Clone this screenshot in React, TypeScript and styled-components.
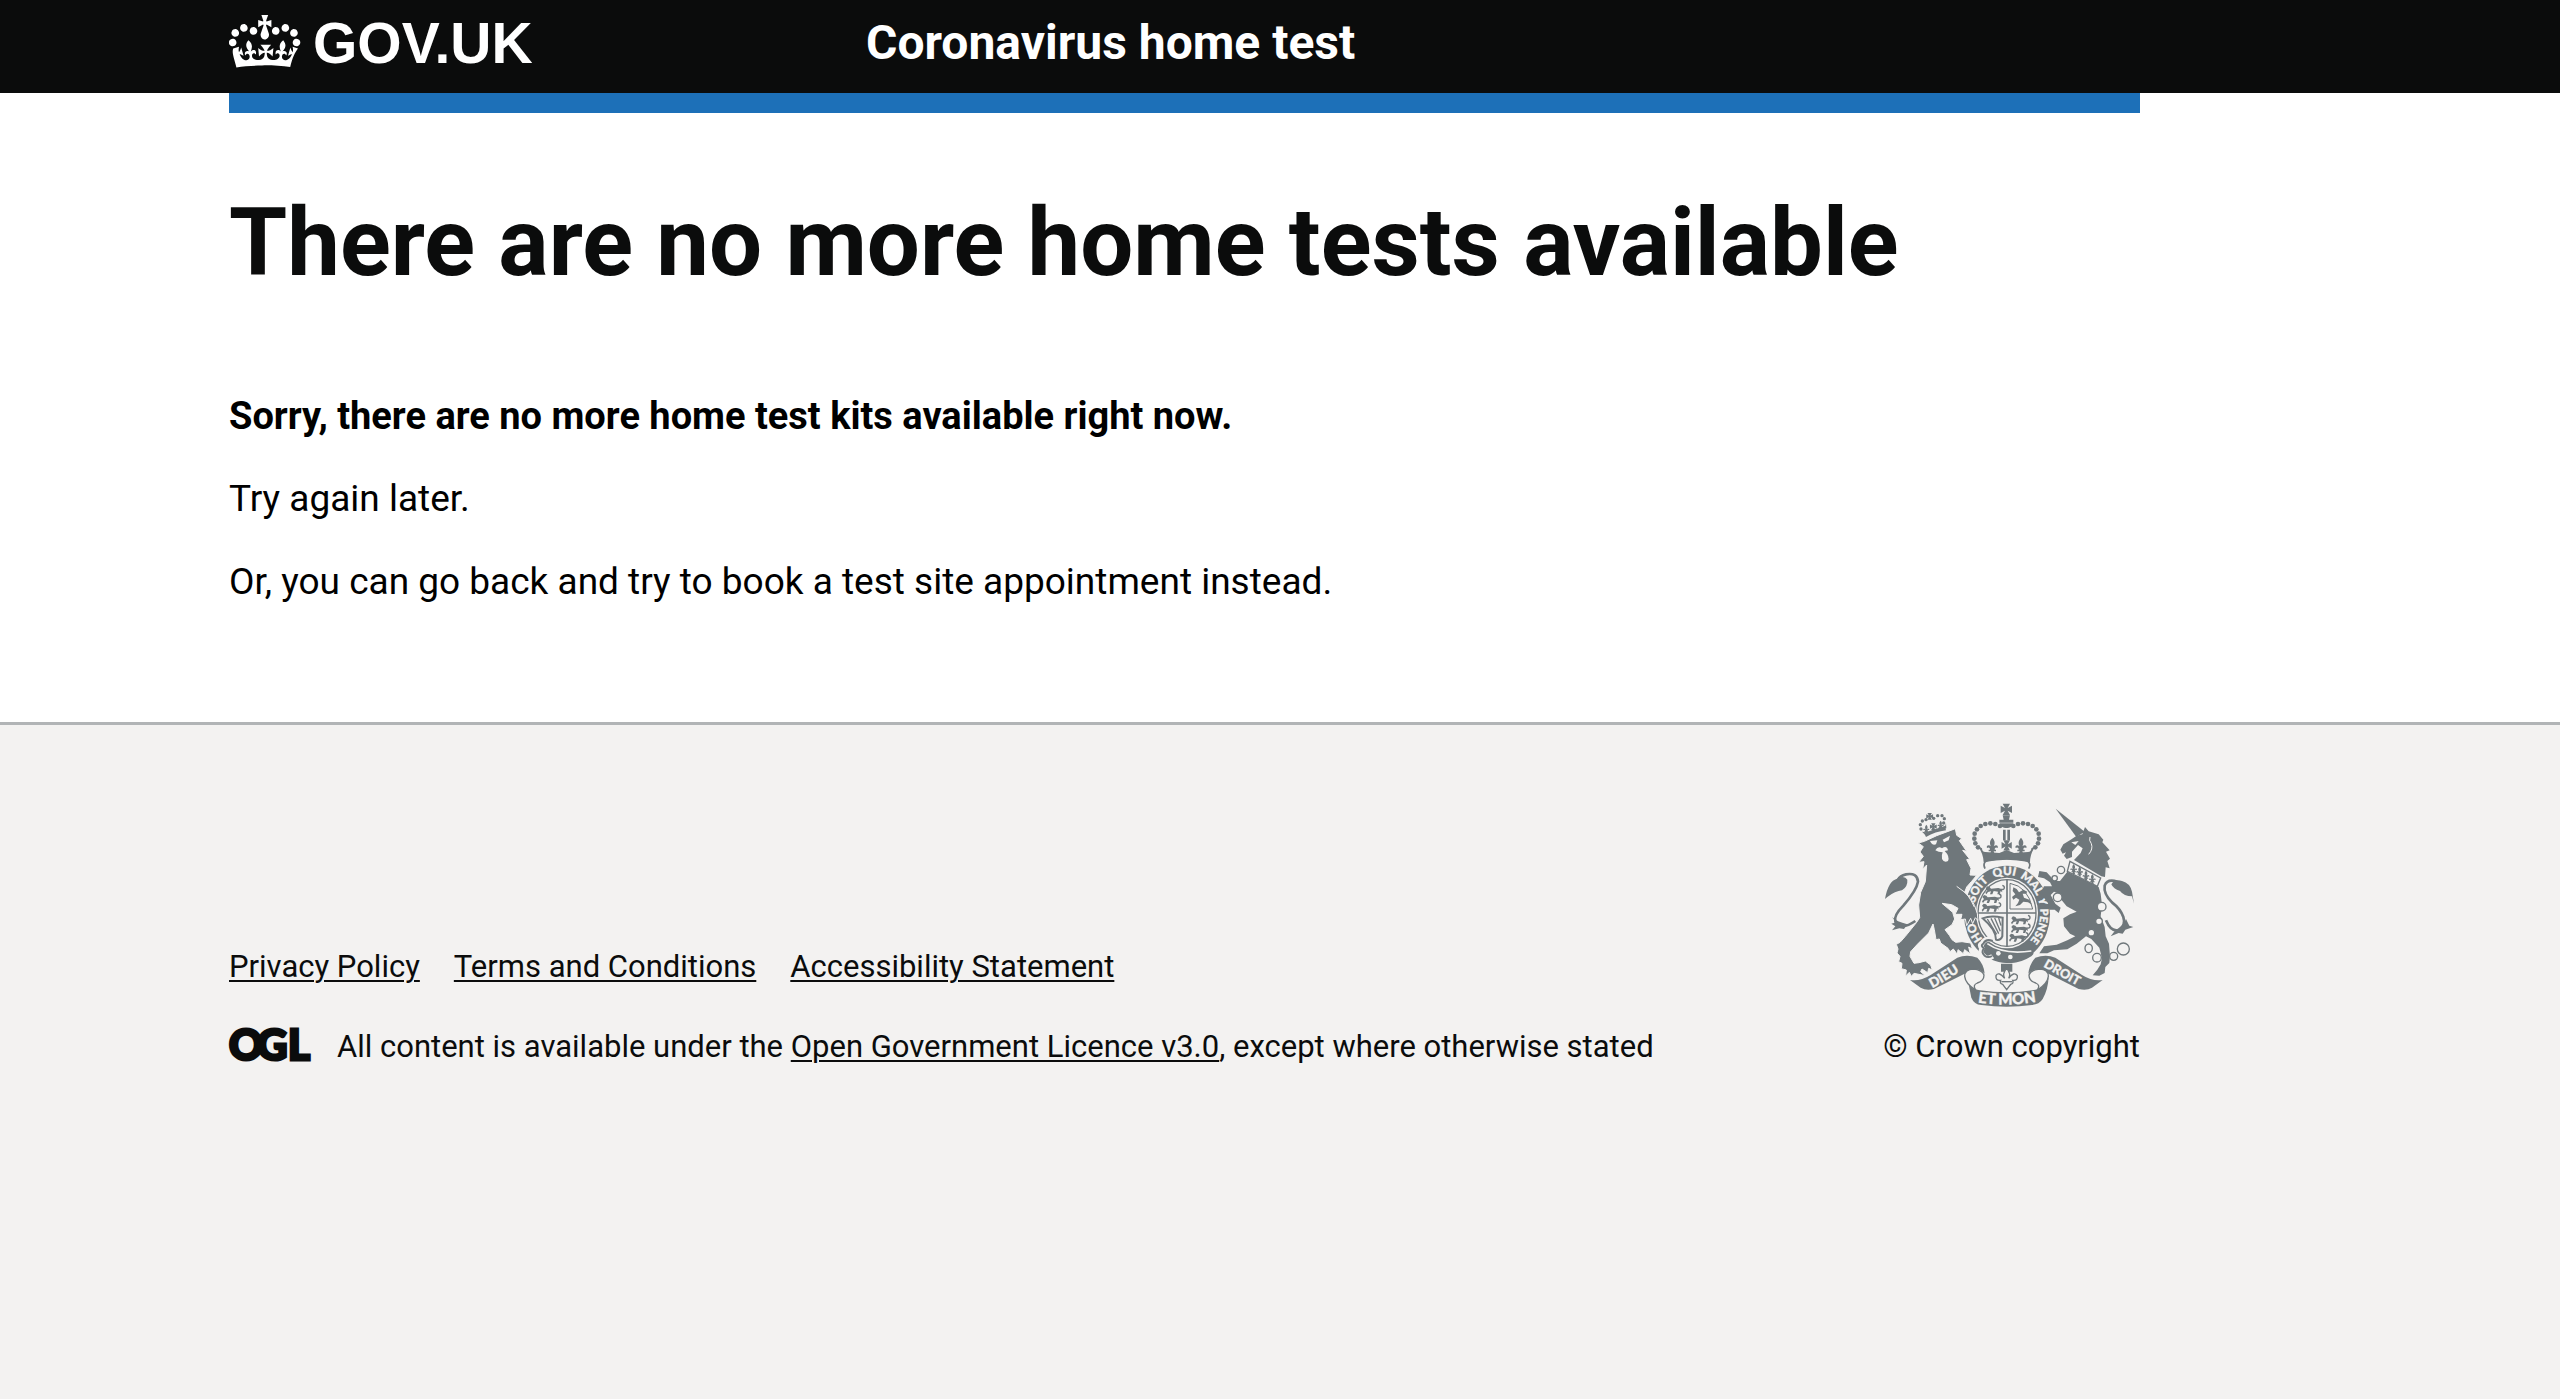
import React from 'react';
import styled, { createGlobalStyle } from 'styled-components';

const ink = '#0b0c0c';
const paper = '#f3f2f1';
const crestGrey = '#6f777b';

const GlobalStyle = createGlobalStyle`
  *, *::before, *::after { box-sizing: border-box; }
  body {
    margin: 0;
    background: ${paper};
    color: ${ink};
    font-family: Roboto, "Liberation Sans", sans-serif;
  }
`;

const Page = styled.div`
  display: flex;
  flex-direction: column;
  min-height: 100vh;
`;

const Container = styled.div`
  max-width: 1911px;
  margin: 0 30px 0 229px;
`;

const Header = styled.header`
  background: ${ink};
  color: #fff;
`;

const HeaderRow = styled(Container)`
  display: grid;
  grid-template-columns: 1fr 2fr;
  min-height: 93px;
`;

const HomeLink = styled.a`
  display: flex;
  gap: 12px;
  padding-top: 7px;
  color: #fff;
  text-decoration: none;
`;

const CrownIcon = styled.svg`
  width: 72px;
  height: 64px;
  fill: currentColor;
`;

const Wordmark = styled.span`
  font: 700 57px/72px "Liberation Sans", Arial, sans-serif;
`;

const ServiceLink = styled.a`
  padding-top: 15px;
  color: #fff;
  font-size: 48px;
  font-weight: 700;
  line-height: 56px;
  text-decoration: none;
`;

const Main = styled.main`
  background: #fff;
`;

const BlueBar = styled.div`
  height: 20px;
  background: #1d70b8;
`;

const Content = styled.div`
  padding: 80px 0 116px;
`;

const Title = styled.h1`
  margin: 0 0 99px;
  font-size: 94px;
  font-weight: 700;
  line-height: 100px;
`;

const Body = styled.div`
  display: grid;
  gap: 35px;
  color: #000;
`;

const Paragraph = styled.p<{ $strong?: boolean }>`
  margin: 0;
  font-size: ${p => (p.$strong ? 38 : 37)}px;
  font-weight: ${p => (p.$strong ? 700 : 400)};
  line-height: 48px;
`;

const Footer = styled.footer`
  flex: 1;
  border-top: 3px solid #b1b4b6;
  padding: 78px 0;
  background: ${paper};
  font-size: 31px;
  line-height: 40px;
`;

const FooterRow = styled(Container)`
  display: flex;
  align-items: flex-end;
  justify-content: space-between;
  gap: 40px;
`;

const FooterMeta = styled.div`
  display: grid;
  gap: 40px;
`;

const LinkList = styled.ul`
  display: flex;
  flex-wrap: wrap;
  gap: 0 34px;
  margin: 0;
  padding: 0;
  list-style: none;
`;

const TextLink = styled.a`
  color: ${ink};
  text-decoration: underline;
  text-decoration-thickness: 2px;
  text-underline-offset: 3px;
`;

const Licence = styled.div`
  display: flex;
  gap: 26px;
  align-items: flex-start;
`;

const OglLogo = styled.svg`
  flex: none;
  width: 82px;
  height: 35px;
  overflow: visible;
`;

const Copyright = styled.a`
  display: flex;
  flex: none;
  flex-direction: column;
  align-items: flex-end;
  gap: 20px;
  color: ${ink};
  text-decoration: none;
`;

const CrestSvg = styled.svg`
  width: 249px;
  height: 204px;
  margin-right: 6px;
`;

function Crown() {
  return (
    <CrownIcon viewBox="0 0 36 32" aria-hidden="true">
      <path d="M6.7 12.2c1 .4 2.1-.1 2.5-1s-.1-2.1-1-2.5c-1-.4-2.1.1-2.5 1-.4 1 0 2.1 1 2.5m-4.3 2.5c1 .4 2.1-.1 2.5-1s-.1-2.1-1-2.5c-1-.4-2.1.1-2.5 1-.5 1 0 2.1 1 2.5m-1.3 4.8c1 .4 2.1-.1 2.5-1 .4-1-.1-2.1-1-2.5-1-.4-2.1.1-2.5 1-.4 1 0 2.1 1 2.5m10.4-5.8c1 .4 2.1-.1 2.5-1s-.1-2.1-1-2.5c-1-.4-2.1.1-2.5 1s0 2.1 1 2.5m17.4-1.5c-1 .4-2.1-.1-2.5-1s.1-2.1 1-2.5c1-.4 2.1.1 2.5 1 .5 1 0 2.1-1 2.5m4.3 2.5c-1 .4-2.1-.1-2.5-1s.1-2.1 1-2.5c1-.4 2.1.1 2.5 1 .5 1 0 2.1-1 2.5m1.3 4.8c-1 .4-2.1-.1-2.5-1-.4-1 .1-2.1 1-2.5 1-.4 2.1.1 2.5 1 .4 1 0 2.1-1 2.5m-10.4-5.8c-1 .4-2.1-.1-2.5-1s.1-2.1 1-2.5c1-.4 2.1.1 2.5 1s0 2.1-1 2.5m-5.3-4.9 2.4 1.3V6.5l-2.4.8c-.1-.1-.1-.2-.2-.3s1-3 1-3h-3.4s1 2.9 1 3c-.1.1-.2.2-.2.3l-2.4-.8v3.6L17 8.8c.1.1.2.2.3.3l-1.4 4.2c-.1.2-.1.4-.1.7 0 1.1.8 2.1 1.9 2.2h.6C19.2 16 20 15 20 14c0-.2 0-.5-.1-.7l-1.4-4.2c.2-.1.3-.2.3-.3m-1 20.3c4.6 0 8.9.3 12.8.9 1.1-4.6 2.4-7.3 3.9-9.2l-2.7-.9c.3 1.2.3 1.9 0 2.7-.4-.4-.8-1.2-1.1-2.3l-1.2 4.1c.8-.5 1.3-.8 2-.8-1.1 2.5-2.6 3.1-3.5 3-1.1-.2-1.7-1.2-1.5-2.1.3-1.3 1.6-1.5 2.1-.2 1-2-.7-2.8-1.9-2.1 1.8-1.9 2.1-3.5.4-5.6-2.1 1.7-2.1 3.4-1.2 5.6-1.2-1.4-3.2-.6-2.5 1.6.9-1.4 2.1-.5 1.9.8-.2 1.1-1.7 2.1-3.5 1.9-2.7-.2-2.9-2.1-2.9-3.6.7-.1 1.9.5 2.9 1.9l.4-4.3c-1.1 1.1-2.1 1.4-3.2 1.4.4-1.2 2.1-3 2.1-3h-5.4s1.7 1.8 2.1 3c-1.1 0-2.1-.3-3.2-1.4l.4 4.3c1-1.4 2.2-2 2.9-1.9-.1 1.5-.2 3.4-2.9 3.6-1.9.2-3.4-.8-3.5-1.9-.2-1.3 1-2.2 1.9-.8.7-2.3-1.2-3-2.5-1.6.9-2.2.9-3.9-1.2-5.6-1.7 2-1.3 3.7.4 5.6-1.2-.7-2.9.1-1.9 2.1.5-1.4 1.8-1.1 2.1.2.2.9-.4 1.9-1.5 2.1-.9.2-2.4-.5-3.5-3 .6 0 1.2.3 2 .8l-1.2-4.1c-.3 1.1-.7 1.9-1.1 2.3-.3-.8-.2-1.4 0-2.7l-2.9.9C1.3 23 2.6 25.7 3.7 30.2c3.9-.6 8.2-.9 12.8-.9" />
    </CrownIcon>
  );
}

function Ogl() {
  return (
    <OglLogo viewBox="0 0 82 35" role="img" aria-label="OGL">
      <g fill={ink} stroke={ink} strokeWidth="3" fontFamily="Lato, sans-serif" fontWeight="900" fontSize="42">
        <text x="0 28 59" y="33">OGL</text>
      </g>
    </OglLogo>
  );
}

const crownBeads = [
  [390, 109], [376, 103], [361, 101], [346, 103], [332, 109], [321, 119], [314, 132], [313, 147], [316, 161], [324, 173],
];

const lionBeads = [
  [153, 118], [151, 105], [157, 94], [168, 90], [191, 86], [203, 78], [216, 78], [223, 87], [221, 100],
];

function Fleur({ x, y, s = 1 }: { x: number; y: number; s?: number }) {
  return (
    <path
      transform={`translate(${x} ${y}) scale(${s})`}
      d="M0-22C-9-12-8-4-4 4C-11-3-19 1-16 9C-11 5-7 8-7 14H-11V19H-4L-7 28H7L4 19H11V14H7C7 8 11 5 16 9C19 1 11-3 4 4C8-4 9-12 0-22Z"
    />
  );
}

function Cross({ x, y, s = 1 }: { x: number; y: number; s?: number }) {
  return (
    <path
      transform={`translate(${x} ${y}) scale(${s})`}
      d="M-11-17H11L4-4L17-11V11L4 4L11 17H-11L-4 4L-17 11V-11L-4-4Z"
    />
  );
}

function Passant({ x, y }: { x: number; y: number }) {
  return (
    <g transform={`translate(${x} ${y})`}>
      <path d="M2 6L7 0L14 2L18 7L40 5L50 8L52 18L47 14L44 24H37L39 16L26 14L22 24H15L18 15L9 17L4 24L1 19L7 12Z" />
      <path d="M48 9C60 12 61 0 52-3" fill="none" stroke={crestGrey} strokeWidth="4" />
    </g>
  );
}

function Crest() {
  return (
    <CrestSvg viewBox="45 40 747 612" aria-hidden="true">
      <defs>
        <path id="garter" d="M411 484C356 484 311 433 311 370S356 256 411 256S511 307 511 370S466 484 411 484Z" />
        <path id="ribbon-left" d="M187 595Q225 575 290 532" />
        <path id="ribbon-mid" d="M323 638Q410 652 500 636" />
        <path id="ribbon-right" d="M519 531Q570 560 644 600" />
      </defs>

      <g fill={crestGrey}>
        {/* imperial crown */}
        <Cross x={409} y={59} />
        <path d="M398 77H420L417 90H430V99H388V90H401Z" />
        <path d="M389 101H430C430 120 389 120 389 101Z" />
        {crownBeads.map(([x, y]) => (
          <React.Fragment key={`${x}-${y}`}>
            <circle cx={x} cy={y} r="7" />
            <circle cx={820 - x} cy={y} r="7" />
          </React.Fragment>
        ))}
        <path d="M399 120H407V152H399ZM412 120H420V152H412Z" />
        <Cross x={410} y={167} s={0.9} />
        <Fleur x={367} y={166} />
        <Fleur x={453} y={166} />
        <path d="M322 168L336 176Q336 187 346 187L388 190L410 181L432 190L474 187Q484 187 484 176L498 168Q480 190 480 218Q410 202 341 218Q340 190 322 168Z" />
      </g>
      <path d="M345 237Q334 214 362 211Q410 203 458 211Q488 214 476 237" fill="none" stroke={crestGrey} strokeWidth="5" />

      {/* garter and shield */}
      <ellipse cx="411" cy="374" rx="129" ry="146" fill={crestGrey} />
      <ellipse cx="411" cy="370" rx="93" ry="106" fill={paper} />
      <ellipse cx="411" cy="370" rx="87" ry="100" fill="none" stroke={crestGrey} strokeWidth="4" />
      <path d="M411 270V470M324 370H498" stroke={crestGrey} strokeWidth="5" />
      <g fill={crestGrey}>
        <Passant x={345} y={290} />
        <Passant x={335} y={316} />
        <Passant x={334} y={342} />
        <Passant x={422} y={380} />
        <Passant x={422} y={406} />
        <Passant x={416} y={432} />
        <path d="M430 293L440 298L447 308L460 300L472 306L468 312L458 312L462 324L478 330L486 345L474 338L460 336L450 346L436 350L444 340L448 330L438 324L430 330L426 322L436 314L428 304Z" />
      </g>
      <g fill="none" stroke={crestGrey} strokeWidth="4">
        <path d="M420 281Q474 290 488 358H420Z" strokeWidth="3" />
        <path d="M338 386Q362 376 398 384L397 440Q390 455 378 450Q378 420 338 386Z" strokeWidth="6" />
        <path d="M352 388L380 434M363 386L386 432M374 385L391 425M386 385L393 408" />
      </g>
      <g fill={paper} stroke={paper} strokeWidth="1" fontFamily="Lato, sans-serif" fontWeight="900" fontSize="35">
        <text><textPath href="#garter" startOffset="84">HO</textPath></text>
        <text><textPath href="#garter" startOffset="198">SOIT</textPath></text>
        <text><textPath href="#garter" startOffset="296">QUI</textPath></text>
        <text><textPath href="#garter" startOffset="376">MAL</textPath></text>
        <text><textPath href="#garter" startOffset="460">Y</textPath></text>
        <text><textPath href="#garter" startOffset="492" fontSize="33">PENSE</textPath></text>
      </g>
      <path d="M350 460Q400 496 478 486Q500 484 484 500Q440 528 400 517L350 500Z" fill={crestGrey} />
      <path d="M352 462Q400 496 484 484" fill="none" stroke={paper} strokeWidth="5" />
      <path d="M368 452Q346 442 336 462Q326 466 336 476Q328 490 342 500Q352 512 368 500" fill="none" stroke={paper} strokeWidth="15" />
      <path d="M368 454Q348 446 340 462Q330 468 342 476Q332 488 344 498Q354 506 366 499" fill="none" stroke={crestGrey} strokeWidth="6" />
      <circle cx="385" cy="491" r="7" fill={paper} />
      <circle cx="421" cy="502" r="7" fill={paper} />

      {/* lion */}
      <g fill={crestGrey} stroke={paper} strokeWidth="3">
        <path d="M145 160L163 155L200 138L256 117L260 137L275 147L268 153L290 185L278 182L299 208L290 210L303 236L300 256L320 257L304 276L290 292L284 308L302 326L314 348L322 372L324 392L316 384L308 402L302 386L290 408L286 388L272 390L276 374L255 374L264 356L245 345L216 341L248 368L254 388L246 405L225 420L238 437L246 450L257 458L276 456L302 460L307 478L296 472L301 493L284 480L280 492L264 480L262 494L250 478L240 486L234 476L212 460L208 448L198 450L193 420L189 403L176 430L142 464L122 486L120 500L132 521L147 519L166 514L182 526L187 541L176 536L173 549L156 538L152 546L166 558L132 551L124 560L118 548L107 559L109 541L94 537L96 521L86 516L90 500L81 490L84 478L79 464L90 458L106 440L140 398L149 384L146 346L152 308L166 276L168 250L170 226L158 238L162 216L146 218L160 200L150 187L160 171Z" />
      </g>
      <path d="M136 394Q92 424 76 396Q70 378 100 348Q140 302 144 276Q142 248 108 254Q90 258 84 270" fill="none" stroke={crestGrey} strokeWidth="8" />
      <g fill={crestGrey}>
        <path d="M45 328Q50 300 60 284Q66 272 84 266Q104 256 112 270Q114 290 96 302Q76 304 52 322Z" />
        <path d="M112 404L102 418L88 416L66 422L76 410L64 402L78 398L66 382Q80 396 112 404Z" />
        <path d="M164 134Q194 118 226 114L228 122Q196 126 168 142Z" />
        {lionBeads.map(([x, y]) => <circle key={`${x}-${y}`} cx={x} cy={y} r="5" />)}
        <Cross x={179} y={80} s={0.6} />
        <Cross x={190} y={111} s={0.6} />
        <Fleur x={169} y={117} s={0.55} />
        <Fleur x={212} y={105} s={0.55} />
        <path d="M156 126L168 128L226 108L228 100L229 116L166 136Z" />
      </g>
      <path d="M180 154L202 152L198 164Q186 168 180 154ZM218 150L240 138L236 152L222 158ZM196 182Q204 168 216 176Q230 166 234 182L224 184Q240 200 234 214Q222 220 216 208Q214 196 218 188L206 186Z" fill={paper} />
      <path d="M260 290L290 312L304 334L313 352" fill="none" stroke={paper} strokeWidth="3" />

      {/* unicorn */}
      <g fill={crestGrey}>
        <path d="M557 57L644 126L619 142Z" />
        <path d="M645 112L656 125L686 134L700 150L697 158L719 182L708 186L720 207L712 214L719 236L707 233L705 262L694 260L612 211L632 190L638 176L624 166L606 186L606 202L590 208L582 198L588 188L578 192L571 180L580 164L602 150L620 138L637 134Z" />
        <path d="M592 246L686 292L692 312L696 346L692 380L704 412L707 440L717 462L720 500L718 520L706 532L704 550L688 558L668 557L682 540L692 524L696 506L688 474L664 448L648 440L620 462L592 479L552 482L532 491L508 491L522 470L560 465L592 452L616 440L600 432L582 410L580 386L600 374L620 366L590 350L574 330L568 312L552 306L542 316L556 342L572 354L566 370L554 360L538 360L534 340L520 322L516 302L522 290L546 290L540 278L522 266L504 262L508 244L530 248L554 274L570 274Z" />
        <path d="M792 342L786 320Q762 320 750 304Q730 298 724 284Q734 266 756 274Q780 280 786 306Z" />
        <path d="M768 388L778 408L790 412L766 420L758 432L746 430L722 440L736 422Q760 410 768 388Z" />
      </g>
      <path d="M708 392Q724 430 748 420Q768 406 760 382Q752 358 726 338Q700 312 704 288Q712 266 742 276" fill="none" stroke={crestGrey} strokeWidth="8" />
      <path d="M600 215L692 265L682 290L592 245Z" fill={paper} stroke={crestGrey} strokeWidth="4" />
      <g fill={crestGrey}>
        <Fleur x={611} y={236} s={0.6} />
        <Fleur x={629} y={244} s={0.6} />
        <Fleur x={648} y={256} s={0.6} />
        <Fleur x={667} y={266} s={0.6} />
      </g>
      <path d="M604 158L626 154L616 166Z" fill={paper} />
      <path d="M660 142Q656 152 664 162Q670 178 656 194" fill="none" stroke={paper} strokeWidth="3" />
      <g fill={paper} stroke={crestGrey} strokeWidth="4">
        <circle cx="573" cy="241" r="11" />
        <circle cx="554" cy="266" r="8" />
        <circle cx="563" cy="323" r="13" />
        <circle cx="695" cy="351" r="13" />
        <circle cx="687" cy="395" r="10" />
        <circle cx="664" cy="429" r="10" />
        <ellipse cx="656" cy="476" rx="11" ry="13" />
        <circle cx="681" cy="504" r="13" />
        <circle cx="731" cy="500" r="12" />
        <circle cx="760" cy="478" r="18" />
      </g>

      {/* motto ribbon */}
      <g fill={crestGrey}>
        <path d="M120 571Q150 576 182 556L262 504Q290 492 322 504Q342 524 344 552Q330 536 308 540L192 598Q168 604 152 594Z" />
        <path d="M698 571Q668 576 636 556L556 504Q528 492 496 504Q478 524 475 552Q490 536 512 540L626 598Q650 604 666 594Z" />
        <path d="M296 584Q304 600 330 602Q410 614 488 602Q514 600 524 584Q532 576 536 562Q534 600 518 628Q508 644 486 646Q410 656 334 646Q312 644 304 624Z" />
        <path d="M393 522H427V546H418Q410 536 402 546H393Z" />
      </g>
      <g fill={paper} stroke={crestGrey} strokeWidth="4">
        <path d="M310 538Q284 538 284 560Q286 582 318 602Q306 586 322 580Q342 574 342 556Q336 540 310 538Z" />
        <path d="M509 538Q535 538 535 560Q533 582 501 602Q513 586 497 580Q477 574 477 556Q483 540 509 538Z" />
        <path d="M410 536Q396 552 404 566Q386 544 378 558Q376 574 392 572Q388 582 398 584L410 600L422 584Q432 582 428 572Q444 574 442 558Q432 544 416 566Q424 552 410 536Z" />
        <path d="M394 576H426" />
      </g>
      <g fill={paper} stroke={paper} strokeWidth="1" fontFamily="Lato, sans-serif" fontWeight="900">
        <text fontSize="40"><textPath href="#ribbon-left">DIEU</textPath></text>
        <text fontSize="45"><textPath href="#ribbon-mid">ET MON</textPath></text>
        <text fontSize="38"><textPath href="#ribbon-right">DROIT</textPath></text>
      </g>
    </CrestSvg>
  );
}

export default function App() {
  return (
    <Page>
      <GlobalStyle />
      <Header>
        <HeaderRow>
          <HomeLink href="#">
            <Crown />
            <Wordmark>GOV.UK</Wordmark>
          </HomeLink>
          <ServiceLink href="#">Coronavirus home test</ServiceLink>
        </HeaderRow>
      </Header>
      <Main>
        <Container>
          <BlueBar />
          <Content>
            <Title>There are no more home tests available</Title>
            <Body>
              <Paragraph $strong>Sorry, there are no more home test kits available right now.</Paragraph>
              <Paragraph>Try again later.</Paragraph>
              <Paragraph>Or, you can go back and try to book a test site appointment instead.</Paragraph>
            </Body>
          </Content>
        </Container>
      </Main>
      <Footer>
        <FooterRow>
          <FooterMeta>
            <LinkList>
              <li><TextLink href="#">Privacy Policy</TextLink></li>
              <li><TextLink href="#">Terms and Conditions</TextLink></li>
              <li><TextLink href="#">Accessibility Statement</TextLink></li>
            </LinkList>
            <Licence>
              <Ogl />
              <span>
                All content is available under the <TextLink href="#">Open Government Licence v3.0</TextLink>, except where otherwise stated
              </span>
            </Licence>
          </FooterMeta>
          <Copyright href="#">
            <Crest />
            © Crown copyright
          </Copyright>
        </FooterRow>
      </Footer>
    </Page>
  );
}
